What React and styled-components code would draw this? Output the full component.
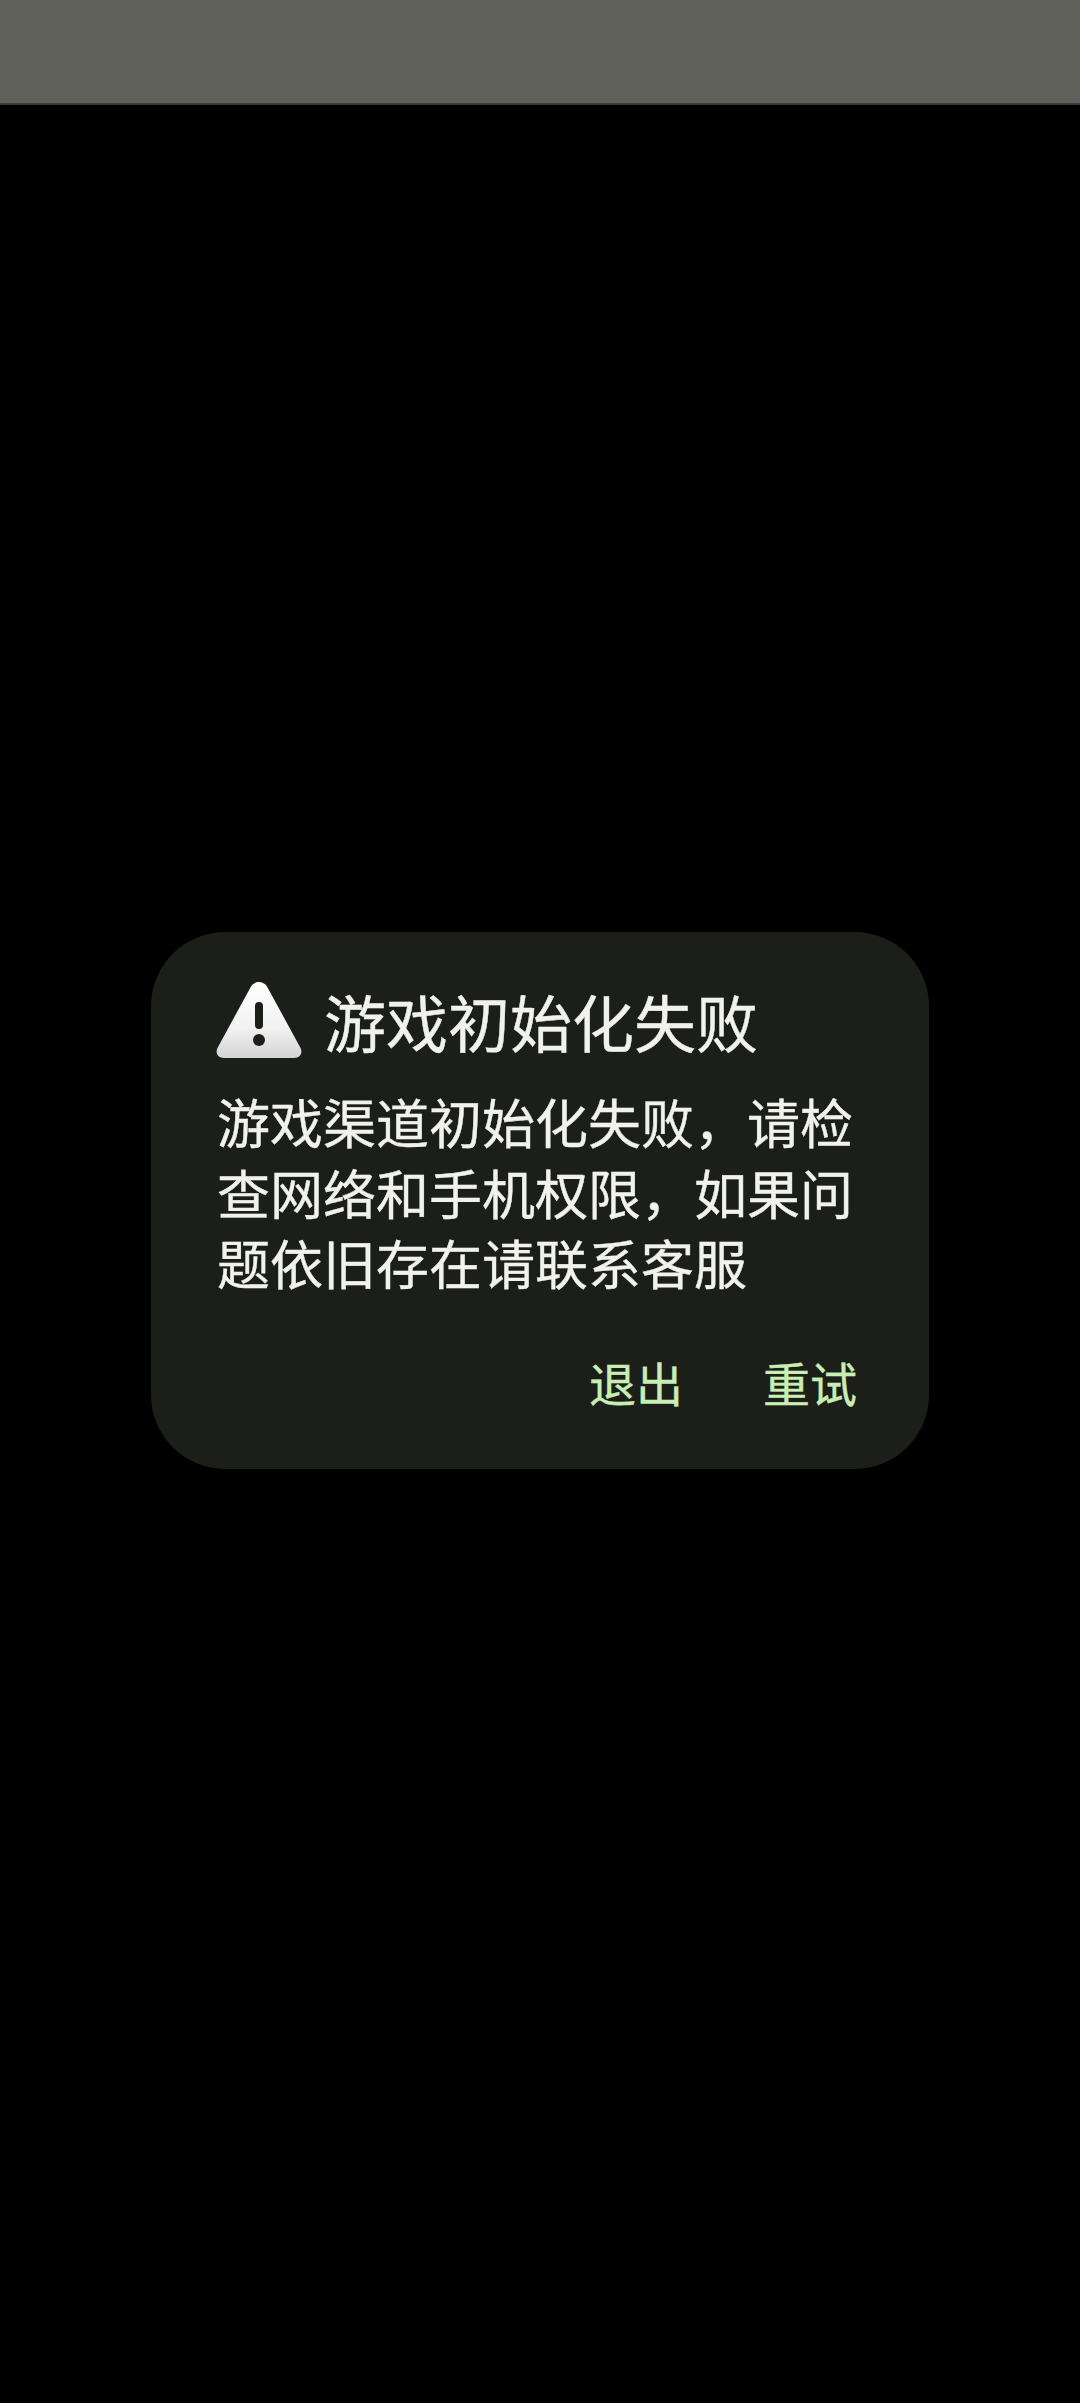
import React from "react";
import styled, { createGlobalStyle } from "styled-components";

const GlobalStyle = createGlobalStyle`
  html, body {
    margin: 0;
    padding: 0;
    background: #000;
  }
  body {
    font-family: "Noto Sans CJK SC", "Liberation Sans", sans-serif;
  }
`;

const Screen = styled.div`
  width: 1080px;
  height: 2403px;
  display: flex;
  flex-direction: column;
  background: #000;
  overflow: hidden;
`;

const TopBar = styled.div`
  height: 103px;
  flex-shrink: 0;
  background: #60615b;
  border-bottom: 2px solid #3a3b37;
`;

const Stage = styled.div`
  flex: 1;
  padding: 827px 0 0 151px;
`;

const Dialog = styled.div`
  width: 778px;
  height: 537px;
  box-sizing: border-box;
  padding: 44px 72px 0 65px;
  background: #1c1e1a;
  border-radius: 74px;
  display: flex;
  flex-direction: column;
`;

const Header = styled.div`
  display: flex;
  align-items: center;
  gap: 22px;
  height: 90px;
`;

const Title = styled.h1`
  margin: 0;
  font-size: 62px;
  font-weight: 400;
  line-height: 90px;
  color: #f1f2ec;
  white-space: nowrap;
  -webkit-text-stroke: 0.4px #f1f2ec;
`;

const Message = styled.p`
  margin: 20px 0 0;
  padding-left: 1px;
  font-size: 53px;
  font-weight: 400;
  line-height: 70.5px;
  color: #f1f2ec;
  -webkit-text-stroke: 0.4px #f1f2ec;
`;

const Actions = styled.div`
  display: flex;
  justify-content: flex-end;
  gap: 80px;
  margin-top: 49px;
`;

const ActionButton = styled.button`
  padding: 0;
  border: none;
  background: none;
  font-family: inherit;
  font-size: 47px;
  line-height: 70px;
  color: #c9eeb4;
  -webkit-text-stroke: 0.4px #c9eeb4;
`;

const IconSvg = styled.svg`
  flex-shrink: 0;
  margin-top: -2px;
`;

const WarningIcon = () => (
  <IconSvg width="86" height="76" viewBox="0 0 86 76">
    <defs>
      <linearGradient id="warnFill" x1="0" y1="0" x2="0" y2="1">
        <stop offset="0" stopColor="#ffffff" />
        <stop offset="0.6" stopColor="#f2f2f2" />
        <stop offset="1" stopColor="#d4d4d4" />
      </linearGradient>
    </defs>
    <path
      d="M35 4.5 C39 -1.5 47 -1.5 51 4.5 L84 65 C87.5 71.5 84 76 78 76 L8 76 C2 76 -1.5 71.5 2 65 Z"
      fill="url(#warnFill)"
    />
    <rect x="39" y="20" width="8" height="27" rx="4" fill="#1c1e1a" />
    <circle cx="43" cy="58" r="6" fill="#1c1e1a" />
  </IconSvg>
);

export default function App() {
  return (
    <Screen>
      <GlobalStyle />
      <TopBar />
      <Stage>
        <Dialog>
          <Header>
            <WarningIcon />
            <Title>游戏初始化失败</Title>
          </Header>
          <Message>游戏渠道初始化失败，请检查网络和手机权限，如果问题依旧存在请联系客服</Message>
          <Actions>
            <ActionButton>退出</ActionButton>
            <ActionButton>重试</ActionButton>
          </Actions>
        </Dialog>
      </Stage>
    </Screen>
  );
}
